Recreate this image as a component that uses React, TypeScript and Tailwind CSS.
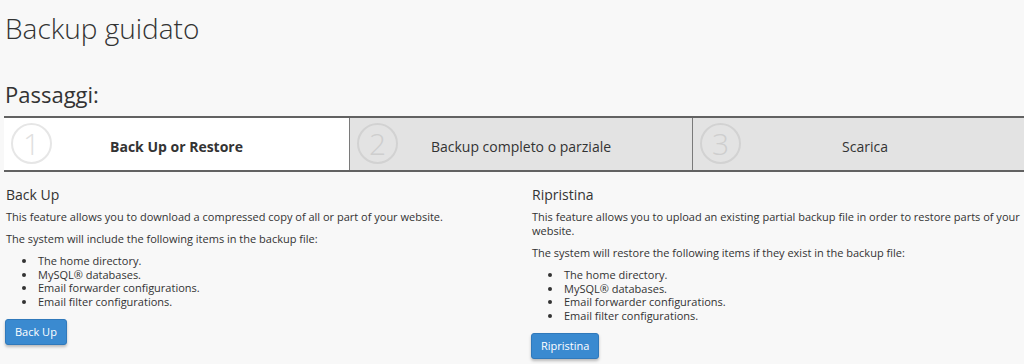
const items = [
  "The home directory.",
  "MySQL® databases.",
  "Email forwarder configurations.",
  "Email filter configurations.",
];

const steps = [
  { n: 1, label: "Back Up or Restore", active: true, w: "w-[345px]" },
  { n: 2, label: "Backup completo o parziale", active: false, w: "w-[343px]" },
  { n: 3, label: "Scarica", active: false, w: "w-[345px] shrink-0" },
];

function Step({ n, label, active, w }: { n: number; label: string; active: boolean; w: string }) {
  return (
    <div
      className={`${w} shrink-0 relative flex items-center justify-center h-[52px] ${
        active ? "bg-white" : "bg-[#e3e3e3] border-l border-[#7a7a7a]"
      }`}
    >
      <div
        className={`absolute left-[7px] top-[5px] w-[41px] h-[41px] rounded-full border-2 flex items-center justify-center text-[30px] font-light leading-none ${
          active ? "border-[#e6e6e6] text-[#e0e0e0]" : "border-[#d2d2d2] text-[#cecece]"
        }`}
      >
        {n}
      </div>
      <span className={`pt-[5px] text-[14px] text-[#333] ${active ? "font-bold" : ""}`}>{label}</span>
    </div>
  );
}

function Section({
  title,
  intro,
  lead,
  button,
}: {
  title: string;
  intro: string;
  lead: string;
  button: string;
}) {
  return (
    <div>
      <h2 className="text-[14px] leading-[18px] text-[#333]">{title}</h2>
      <p className="mt-[6px] text-[11px] leading-[14px]">{intro}</p>
      <p className="mt-[8px] text-[11px] leading-[14px]">{lead}</p>
      <ul className="mt-[8px] pl-[31px] list-disc text-[11px] leading-[13.7px]">
        {items.map((it) => (
          <li key={it} className="pl-[1px]">{it}</li>
        ))}
      </ul>
      <button className="mt-[10px] -ml-[1px] h-[26px] px-[9px] rounded-[3px] bg-[#3a8ad0] border border-[#3079bb] text-white text-[11px] shadow-[0_2px_3px_rgba(0,0,0,0.25)]">
        {button}
      </button>
    </div>
  );
}

export default function App() {
  return (
    <div
      className="w-[1024px] h-[364px] overflow-hidden bg-[#f8f8f8] text-[#333]"
      style={{ fontFamily: '"Open Sans", "Liberation Sans", sans-serif' }}
    >
      <h1 className="pl-[5px] pt-[10px] text-[28px] leading-[36px] font-light">Backup guidato</h1>
      <h3 className="pl-[5px] mt-[34px] text-[22px] leading-[28px]">Passaggi:</h3>
      <div className="mt-[8px] flex ml-[4px] border-y-2 border-[#626262]">
        {steps.map((s) => (
          <Step key={s.n} {...s} />
        ))}
      </div>
      <div className="grid grid-cols-2 gap-[34px] pl-[6px] mt-[14px]">
        <Section
          title="Back Up"
          intro="This feature allows you to download a compressed copy of all or part of your website."
          lead="The system will include the following items in the backup file:"
          button="Back Up"
        />
        <Section
          title="Ripristina"
          intro="This feature allows you to upload an existing partial backup file in order to restore parts of your website."
          lead="The system will restore the following items if they exist in the backup file:"
          button="Ripristina"
        />
      </div>
    </div>
  );
}
